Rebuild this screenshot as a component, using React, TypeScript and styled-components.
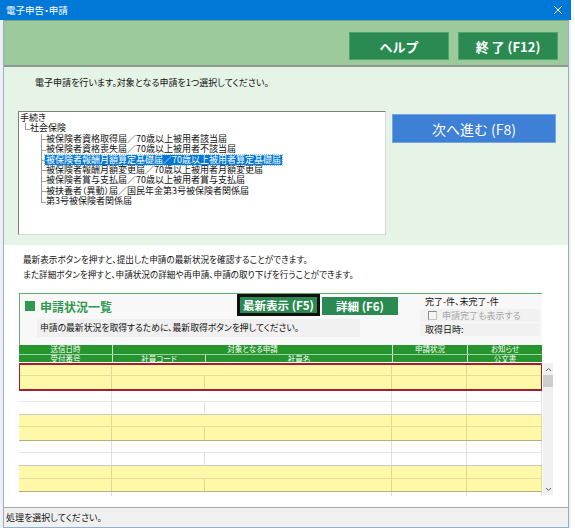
import React from "react";
import styled, { createGlobalStyle } from "styled-components";

const GlobalStyle = createGlobalStyle`
  * { box-sizing: border-box; }
  body {
    margin: 0;
    background: #fff;
    font-family: "Noto Sans CJK JP", "Noto Sans", sans-serif;
    font-feature-settings: "palt";
    color: #111;
  }
`;

const COLS = "93px 93px 187px 75px 75px";

const Window = styled.div`
  width: 571px;
  height: 528px;
  display: flex;
  flex-direction: column;
  background: #f0f0f0;
`;

const TitleBar = styled.header`
  height: 20px;
  flex: none;
  background: #0078d7;
  color: #fff;
  font-size: 9.5px;
  display: flex;
  align-items: center;
  justify-content: space-between;
  padding: 0 8px 0 6px;
`;

const Client = styled.div`
  flex: 1;
  min-height: 0;
  display: flex;
  flex-direction: column;
  margin: 0 2px 0 3px;
  border: 1px solid #8fb0d0;
  border-top: none;
  background: #fff;
`;

const Toolbar = styled.div`
  height: 47px;
  flex: none;
  display: flex;
  justify-content: flex-end;
  gap: 9px;
  padding: 11px 10px 0 0;
  background: #9cca9d;
  border-top: 1px solid #78a87c;
  border-bottom: 2px solid #8e9a90;
`;

const ToolButton = styled.button`
  width: 100px;
  height: 28px;
  background: #2b8a51;
  border: 1px solid #4fa56b;
  color: #fff;
  font-family: inherit;
  font-size: 13px;
  font-weight: bold;
  padding: 0;
  white-space: pre;
`;

const Chooser = styled.section`
  height: 178px;
  flex: none;
  background: #e6f4e7;
  padding: 9px 0 0 14px;
`;

const Lead = styled.p`
  margin: 0 0 21px 17px;
  font-size: 9px;
  line-height: 14px;
`;

const ChooserRow = styled.div`
  display: flex;
  align-items: flex-start;
  gap: 6px;
`;

const TreeBox = styled.div`
  width: 368px;
  height: 124px;
  background: #fff;
  border: 1px solid #d8d8d8;
  border-top-color: #7f7f7f;
  border-left-color: #7f7f7f;
  padding: 1px 1px;
  font-size: 9px;
  line-height: 10.4px;
  overflow: hidden;
  white-space: nowrap;
`;

const Branch = styled.ul<{ $indent: number }>`
  list-style: none;
  margin: 0;
  padding: 0 0 0 ${(p) => p.$indent}px;
`;

const Node = styled.li`
  position: relative;
  padding-left: 5px;

  &::before {
    content: "";
    position: absolute;
    left: 0;
    top: 0;
    width: 4px;
    height: 5.5px;
    border-left: 1px solid #9a9a9a;
    border-bottom: 1px solid #9a9a9a;
  }
  &:not(:last-child)::after {
    content: "";
    position: absolute;
    left: 0;
    top: 0;
    bottom: 0;
    border-left: 1px solid #9a9a9a;
  }
`;

const Label = styled.span<{ $selected?: boolean }>`
  display: block;
  width: max-content;
  height: 10.4px;
  line-height: 10.4px;
  padding: 0 1px;
  margin-left: -1px;
  background: ${(p) => (p.$selected ? "#0078d7" : "transparent")};
  color: ${(p) => (p.$selected ? "#fff" : "#111")};
  outline: ${(p) => (p.$selected ? "1px dotted #9cc6ee" : "none")};
`;

const NextButton = styled.button`
  margin-top: 3px;
  width: 164px;
  height: 29px;
  background: #3d80d6;
  border: 1px solid #74a4e2;
  color: #fff;
  font-family: inherit;
  font-size: 14px;
  padding: 0;
`;

const Results = styled.section`
  flex: 1;
  min-height: 0;
  display: flex;
  flex-direction: column;
  padding: 7px 0 0 15px;
  background: #fff;
`;

const Notes = styled.div`
  padding-left: 4px;
  font-size: 8.6px;
  line-height: 15px;
`;

const Panel = styled.div`
  margin-top: 11px;
  width: 523px;
  height: 52px;
  display: flex;
  background: #f8f8f8;
  border-top: 1px solid #62ad70;
  border-left: 1px solid #62ad70;
`;

const PanelMain = styled.div`
  width: 400px;
  display: flex;
  flex-direction: column;
`;

const PanelTop = styled.div`
  height: 24px;
  display: flex;
  align-items: center;
`;

const PanelTitle = styled.h2`
  margin: 0;
  width: 217px;
  padding-left: 5px;
  display: flex;
  align-items: center;
  gap: 5px;
  font-size: 12px;
  font-weight: bold;
  color: #2e9a4e;
`;

const Square = styled.span`
  width: 10px;
  height: 10px;
  background: #2e9a4e;
`;

const PanelButton = styled.button<{ $focused?: boolean }>`
  height: ${(p) => (p.$focused ? 22 : 18)}px;
  width: ${(p) => (p.$focused ? 83 : 76)}px;
  margin-left: ${(p) => (p.$focused ? 0 : 2)}px;
  margin-top: ${(p) => (p.$focused ? -2 : 0)}px;
  background: #2b8a51;
  border: ${(p) => (p.$focused ? "3px solid #111" : "none")};
  color: #fff;
  font-family: inherit;
  font-size: 11.5px;
  font-weight: bold;
  padding: 0;
`;

const Hint = styled.div`
  margin: 1px 0 0 17px;
  width: 323px;
  height: 18px;
  padding-left: 3px;
  background: #f0f0f0;
  font-size: 8.8px;
  line-height: 18px;
`;

const PanelInfo = styled.div`
  flex: 1;
  display: flex;
  flex-direction: column;
  gap: 1px;
  padding: 1px 2px 0 0;
`;

const InfoLine = styled.div<{ $muted?: boolean; $shade?: boolean }>`
  height: 13px;
  padding-left: 5px;
  display: flex;
  align-items: center;
  gap: 5px;
  font-size: 9px;
  background: ${(p) => (p.$shade ? "#f1f1f1" : "transparent")};
  color: ${(p) => (p.$muted ? "#a6a6a6" : "#111")};
`;

const Check = styled.span`
  width: 9px;
  height: 9px;
  margin-left: 3px;
  background: #f4f4f4;
  border: 1px solid #c4c4c4;
  border-top-color: #8a8a8a;
  border-left-color: #8a8a8a;
`;

const Grid = styled.div`
  width: 523px;
  display: flex;
  flex-direction: column;
`;

const HeadRow = styled.div`
  display: grid;
  grid-template-columns: ${COLS};
  height: 8.5px;
  background: #26952e;

  & + & {
    border-top: 1px solid #9fd2a2;
  }
`;

const HeadCell = styled.div<{ $span?: number }>`
  grid-column: span ${(p) => p.$span ?? 1};
  border-left: 1px solid #cfe6d0;
  color: #fff;
  font-size: 7.5px;
  line-height: 8px;
  text-align: center;
  overflow: hidden;

  &:first-child {
    border-left: none;
  }
`;

const Scroller = styled.div`
  display: flex;
  gap: 1px;
`;

const Viewport = styled.div`
  width: 523px;
  height: 134px;
  padding-top: 2px;
  overflow: hidden;
  background: #fff;
`;

const Record = styled.div<{ $yellow?: boolean; $selected?: boolean }>`
  display: grid;
  grid-template-columns: ${COLS};
  grid-template-rows: 12.3px 12.3px;
  background: ${(p) => (p.$yellow ? "#fff8a8" : "#fff")};
  border-bottom: 1px solid ${(p) => (p.$yellow ? "#b4ae82" : "#c9c9c9")};
  outline: ${(p) => (p.$selected ? "2px solid #a51d2f" : "none")};
  outline-offset: -1px;
`;

const Cell = styled.div<{ $span?: number }>`
  grid-column: span ${(p) => p.$span ?? 1};
  border-right: 1px solid rgba(0, 0, 0, 0.12);
  border-bottom: 1px solid rgba(0, 0, 0, 0.1);

  &:nth-child(n + 5) {
    border-bottom: none;
  }
`;

const ScrollBar = styled.div`
  width: 10px;
  height: 132px;
  margin-top: 1px;
  background: #f0f0f0;
  display: flex;
  flex-direction: column;
  align-items: center;
`;

const Arrow = styled.div`
  height: 12px;
  width: 10px;
  display: flex;
  align-items: center;
  justify-content: center;
`;

const Thumb = styled.div`
  width: 10px;
  height: 12px;
  background: #cdcdcd;
`;

const Track = styled.div`
  flex: 1;
`;

const StatusBar = styled.footer`
  height: 20px;
  flex: none;
  border-top: 1px solid #a8a8a8;
  background: #f0f0f0;
  padding-left: 2px;
  font-size: 9px;
  line-height: 19px;
`;

const forms = [
  "被保険者資格取得届／70歳以上被用者該当届",
  "被保険者資格喪失届／70歳以上被用者不該当届",
  "被保険者報酬月額算定基礎届／70歳以上被用者算定基礎届",
  "被保険者報酬月額変更届／70歳以上被用者月額変更届",
  "被保険者賞与支払届／70歳以上被用者賞与支払届",
  "被扶養者（異動）届／国民年金第3号被保険者関係届",
  "第3号被保険者関係届",
];

const records = [true, false, true, false, true, false];

function Chevron({ up }: { up?: boolean }) {
  return (
    <svg width="7" height="5" viewBox="0 0 7 5">
      <polyline
        points={up ? "1,4 3.5,1.5 6,4" : "1,1 3.5,3.5 6,1"}
        fill="none"
        stroke="#606060"
        strokeWidth="1"
      />
    </svg>
  );
}

export default function App() {
  return (
    <>
      <GlobalStyle />
      <Window>
        <TitleBar>
          <span>電子申告・申請</span>
          <svg width="10" height="10" viewBox="0 0 10 10">
            <path d="M1 1 L9 9 M9 1 L1 9" stroke="#fff" strokeWidth="1" />
          </svg>
        </TitleBar>
        <Client>
          <Toolbar>
            <ToolButton>ヘルプ</ToolButton>
            <ToolButton>終 了 (F12)</ToolButton>
          </Toolbar>

          <Chooser>
            <Lead>電子申請を行います。対象となる申請を1つ選択してください。</Lead>
            <ChooserRow>
              <TreeBox>
                <Label>手続き</Label>
                <Branch $indent={5}>
                  <Node>
                    <Label>社会保険</Label>
                    <Branch $indent={11}>
                      {forms.map((f, i) => (
                        <Node key={f}>
                          <Label $selected={i === 2}>{f}</Label>
                        </Node>
                      ))}
                    </Branch>
                  </Node>
                </Branch>
              </TreeBox>
              <NextButton>次へ進む (F8)</NextButton>
            </ChooserRow>
          </Chooser>

          <Results>
            <Notes>
              <div>最新表示ボタンを押すと、提出した申請の最新状況を確認することができます。</div>
              <div>また詳細ボタンを押すと、申請状況の詳細や再申請、申請の取り下げを行うことができます。</div>
            </Notes>

            <Panel>
              <PanelMain>
                <PanelTop>
                  <PanelTitle>
                    <Square />
                    申請状況一覧
                  </PanelTitle>
                  <PanelButton $focused>最新表示 (F5)</PanelButton>
                  <PanelButton>詳細 (F6)</PanelButton>
                </PanelTop>
                <Hint>申請の最新状況を取得するために、最新取得ボタンを押してください。</Hint>
              </PanelMain>
              <PanelInfo>
                <InfoLine>完了-件、未完了-件</InfoLine>
                <InfoLine $muted $shade>
                  <Check />
                  申請完了も表示する
                </InfoLine>
                <InfoLine $shade>取得日時:</InfoLine>
              </PanelInfo>
            </Panel>

            <Grid>
              <HeadRow>
                <HeadCell>送信日時</HeadCell>
                <HeadCell $span={2}>対象となる申請</HeadCell>
                <HeadCell>申請状況</HeadCell>
                <HeadCell>お知らせ</HeadCell>
              </HeadRow>
              <HeadRow>
                <HeadCell>受付番号</HeadCell>
                <HeadCell>社員コード</HeadCell>
                <HeadCell>社員名</HeadCell>
                <HeadCell />
                <HeadCell>公文書</HeadCell>
              </HeadRow>
            </Grid>

            <Scroller>
              <Viewport>
                {records.map((yellow, i) => (
                  <Record key={i} $yellow={yellow} $selected={i === 0}>
                    <Cell />
                    <Cell $span={2} />
                    <Cell />
                    <Cell />
                    <Cell />
                    <Cell />
                    <Cell />
                    <Cell />
                    <Cell />
                  </Record>
                ))}
              </Viewport>
              <ScrollBar>
                <Arrow>
                  <Chevron up />
                </Arrow>
                <Thumb />
                <Track />
                <Arrow>
                  <Chevron />
                </Arrow>
              </ScrollBar>
            </Scroller>
          </Results>

          <StatusBar>処理を選択してください。</StatusBar>
        </Client>
      </Window>
    </>
  );
}
